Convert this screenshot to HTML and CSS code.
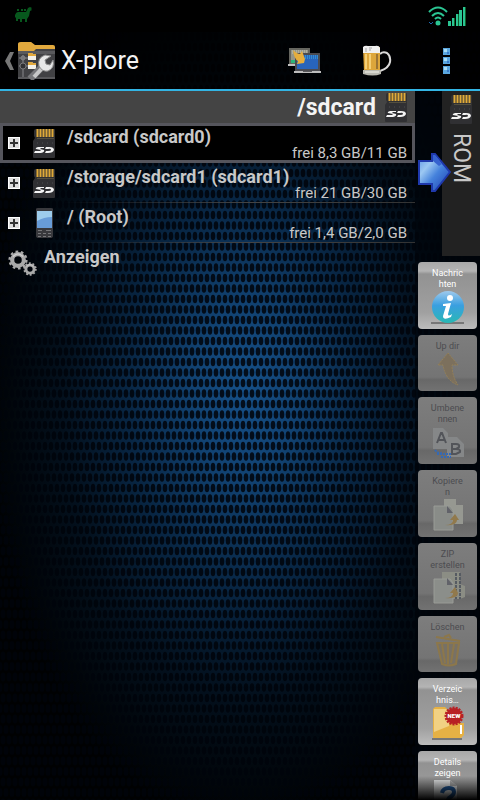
FILE: index.html
```html
<!DOCTYPE html>
<html lang="de">
<head>
<meta charset="utf-8">
<meta name="viewport" content="width=device-width, initial-scale=1">
<title>X-plore</title>
<link rel="stylesheet" href="styles.css">
</head>
<body>
<svg class="wallpaper" width="100%" height="100%" aria-hidden="true">
  <defs>
    <radialGradient id="glow" cx=".51" cy=".49" r=".54">
      <stop offset="0" stop-color="#154f87"/>
      <stop offset=".2" stop-color="#114272"/>
      <stop offset=".45" stop-color="#082644"/>
      <stop offset=".7" stop-color="#03101d"/>
      <stop offset="1" stop-color="#000102"/>
    </radialGradient>
    <pattern id="mesh" width="6" height="21" patternUnits="userSpaceOnUse">
      <g fill="#00040a" fill-opacity=".86">
        <ellipse cx="3" cy="5" rx="2.3" ry="4.3"/>
        <ellipse cx="0" cy="15.5" rx="2.3" ry="4.3"/>
        <ellipse cx="6" cy="15.5" rx="2.3" ry="4.3"/>
      </g>
    </pattern>
  </defs>
  <rect width="100%" height="100%" fill="url(#glow)"/>
  <rect width="100%" height="100%" fill="url(#mesh)"/>
</svg>

<svg class="sprites" aria-hidden="true">
  <symbol id="sd" viewBox="0 0 24 31">
    <path d="M4 1h18q1 0 1 1v27q0 1-1 1H2q-1 0-1-1V13l2-3-1-2V3q0-2 2-2z" fill="#303033"/>
    <path d="M5.500 1v8M8.500 1v8M11.500 1v8M14.500 1v8M17.500 1v8M20.500 1v8" stroke="#e0aa38" stroke-width="2"/>
    <path d="M5 10h17v1H5z" fill="#55503f"/>
    <path d="M12 19H6q-3 1-2 2l5 1-1 1H3l-1 2h7q4-1 3-3l-4-1 1-1h3zM14 19h3q5 0 5 3-1 3-6 3h-3l1-2h2q3 0 3-1 0-2-3-1h-3z" fill="#f4f4f4"/>
    <path d="M5 15h1m4 0h1m4 0h1m4 0h1" stroke="#4c4c50"/>
  </symbol>
  <symbol id="gear" viewBox="-12 -12 24 24">
    <circle r="7" fill="none" stroke="#a9a9a9" stroke-width="5"/>
    <circle r="10" fill="none" stroke="#a9a9a9" stroke-width="3" stroke-dasharray="3.140 3.140"/>
    <path d="M-6-4Q0-11 6-4" fill="none" stroke="#d0d0d0" stroke-width="1.500"/>
  </symbol>
</svg>

<div class="screen">
  <div class="status">
    <svg width="18" height="16" viewBox="0 0 18 16" fill="#07571d" role="img" aria-label="Benachrichtigung">
      <path d="M0 9q1-3 3-3h8l2-4 2-1 2 1-1 1 1 1-2 1-1 5-2 3v3h-2v-3H7v3H5v-3H3v2H1v-3l-1-1z"/>
      <path d="M2 3h2v2H2zM6 3h2v2H6zM9 3h2v2H9z"/>
    </svg>
    <svg width="39" height="20" viewBox="0 0 39 20" role="img" aria-label="WLAN und Mobilfunk">
      <g fill="none" stroke="#2bc593" stroke-width="2">
        <path d="M1 6q9-9 18 0M4 10q6-6 12 0M7 13q3-3 6 0"/>
      </g>
      <circle cx="10" cy="17" r="2.500" fill="#2bc593"/>
      <path d="M1 16l2 2 2-2" fill="none" stroke="#1c6ab0"/>
      <path d="M20 15h3v5h-3zM24 12h3v8h-3zM28 8h2v12h-2zM31 4h3v16h-3zM35 1h3v19h-3z" fill="#2bc593"/>
      <path d="M26 12h1v8h-1zM30 8h1v12h-1zM37 1h1v19h-1z" fill="#0d622c"/>
    </svg>
  </div>

  <header class="appbar">
    <button class="home" type="button" aria-label="Zurück">
      <svg width="10" height="20" viewBox="0 0 10 20"><path d="M5 1h4L5 10l4 9H5L0 10z" fill="#777"/></svg>
      <svg width="39" height="39" viewBox="0 0 39 39">
        <path d="M1 4q0-3 3-3h10l4 4h18q2 0 2 3v30H1z" fill="#414144"/>
        <path d="M1 10V3q0-2 3-2h10l4 3h18q2 0 2 2v2H19l-2 2z" fill="#e2a93d"/>
        <path d="M1 10h37v3H1zM1 36h37v2H1z" fill="#59595c"/>
        <path d="M6 14v22M2 17h9M2 25h10" stroke="#88888b"/>
        <circle cx="6" cy="17" r="2" fill="none" stroke="#88888b"/><circle cx="6" cy="25" r="3" fill="#303033" stroke="#77777a"/>
        <path d="M11 12h4l1 1h3v6h-8zM11 21h4l1 1h3v6h-8z" fill="#f3f0e8"/>
        <path d="M11 12h4l1 1h3v2h-8zM11 21h4l1 1h3v2h-8z" fill="#e2a93d"/>
        <path d="M13 38l12-12" stroke="#77777a" stroke-width="7"/>
        <path d="M17 36l11-12" stroke="#c8c8c8" stroke-width="4"/>
        <path d="M22 25q-2-8 6-11l6 1-6 4 1 4 4 1 3-5q2 8-5 11-6 1-9-5z" fill="#e7e7e7" stroke="#8d8d8d"/>
      </svg>
      <span>X-plore</span>
    </button>
    <div class="actions">
      <button type="button" aria-label="Netzwerk">
        <svg width="34" height="28" viewBox="0 0 34 28">
          <path d="M1 1h21v16H1z" fill="#66665f"/><path d="M3 3h17v10H3z" fill="#969688"/>
          <path d="M4 4h15M4 6h15" stroke="#c7c7b5" stroke-dasharray="1 1"/>
          <path d="M0 17h8v2H0z" fill="#c0c0c0"/><path d="M3 13h4v3H3z" fill="#2bb579"/>
          <path d="M7 6h25v18H7z" fill="#4b4b50"/><path d="M9 8h21v14H9z" fill="#2864bb"/>
          <path d="M17 9h13M17 11h13" stroke="#3eb9e5" stroke-dasharray="1 1"/>
          <path d="M5 3q4 4 7 4l2-3 3 8-1 4-7 1 1-3q-4-2-5-11z" fill="#e6ae3d"/>
          <path d="M6 24h27v2H6z" fill="#bdbdbd"/><path d="M15 24h9v1h-9z" fill="#59595c"/>
        </svg>
      </button>
      <button type="button" aria-label="Spenden">
        <svg width="30" height="32" viewBox="0 0 30 32">
          <path d="M18 9q3-3 7-1 4 3 3 9-1 6-10 9" fill="none" stroke="#d9d9d9" stroke-width="2"/>
          <path d="M1 2h17v25H2z" fill="#dda63b"/>
          <path d="M1 2q2-2 5-1h7q4-1 5 2v5H1z" fill="#f0f0f0"/>
          <path d="M4 9v15M8 9v15" stroke="#f5cf75" stroke-width="2"/><path d="M15 9v15" stroke="#9b7434" stroke-width="2"/>
          <path d="M1 25h18v4q-8 3-18 0z" fill="#b9b9b0"/><path d="M3 27h14" stroke="#f5f5ed"/>
          <path d="M4 3v4M7 3h3M7 5h2" stroke="#a7a7a7"/>
        </svg>
      </button>
      <button type="button" aria-label="Menü">
        <svg width="8" height="26" viewBox="0 0 8 26">
          <path d="M0 0h7v7H0zM0 9h7v7H0zM0 18h7v8H0z" fill="#5aa7df"/>
          <path d="M1 1h3v3H1zM1 10h3v3H1zM1 19h3v3H1z" fill="#a8dcf5"/>
          <path d="M4 4h2v2H4zM4 13h2v2H4zM4 22h2v2H4z" fill="#3a78c7"/>
        </svg>
      </button>
    </div>
  </header>

  <div class="content">
    <main class="pane">
      <h1 class="path">/sdcard <svg width="24" height="31"><use href="#sd"/></svg></h1>
      <ul class="list">
        <li class="row selected">
          <button class="expand" type="button" aria-label="/sdcard öffnen"></button>
          <svg width="24" height="31"><use href="#sd"/></svg>
          <div class="info"><span class="name">/sdcard (sdcard0)</span><span class="free">frei 8,3 GB/11 GB</span></div>
        </li>
        <li class="row">
          <button class="expand" type="button" aria-label="/storage/sdcard1 öffnen"></button>
          <svg width="24" height="31"><use href="#sd"/></svg>
          <div class="info"><span class="name">/storage/sdcard1 (sdcard1)</span><span class="free">frei 21 GB/30 GB</span></div>
        </li>
        <li class="row">
          <button class="expand" type="button" aria-label="Root öffnen"></button>
          <svg width="24" height="31" viewBox="0 0 24 31">
            <path d="M4 1q0-1 2-1h13q2 0 2 1v27q0 2-3 2H7q-3 0-3-2z" fill="#39393d"/>
            <path d="M5 3h15v17H5z" fill="#689cd8"/><path d="M5 3h15v6q-8 0-15 4z" fill="#9dccec"/>
            <path d="M6 22h4v1H6zM14 22h5v1h-5zM6 25h3v1H6zM11 25h3v1h-3zM16 25h3v1h-3zM6 28h3v1H6zM11 28h3v1h-3zM16 28h3v1h-3z" fill="#77777a"/>
          </svg>
          <div class="info"><span class="name">/ (Root)</span><span class="free">frei 1,4 GB/2,0 GB</span></div>
        </li>
        <li class="row show">
          <svg width="30" height="27"><use href="#gear" width="20" height="20"/><use href="#gear" x="15" y="12" width="14" height="14"/></svg>
          <button class="name" type="button">Anzeigen</button>
        </li>
      </ul>
    </main>

    <aside class="side">
      <div class="switch">
        <button class="tab" type="button"><svg width="24" height="31"><use href="#sd"/></svg><span>ROM</span></button>
        <svg class="arrow" width="33" height="39" viewBox="0 0 33 39" aria-hidden="true">
          <defs><linearGradient id="blue" x2="1" y2="1"><stop stop-color="#5c94e4"/><stop offset=".3" stop-color="#9cc8f2"/><stop offset=".55" stop-color="#4582dc"/><stop offset="1" stop-color="#1a3cae"/></linearGradient></defs>
          <path d="M1 8h13V1h3l15 18-15 19h-3v-7H1z" fill="url(#blue)" stroke="#1f39ad" stroke-width="2"/>
          <path d="M15 2h2l7 9-3 2-6-5z" fill="#3562cf"/>
        </svg>
      </div>
      <div class="tools">
        <button class="tool" type="button"><span>Nachric<br>hten</span>
          <svg width="35" height="35" viewBox="0 0 35 35">
            <path d="M1 33h33" stroke="#777" stroke-width="2"/>
            <defs><linearGradient id="orb" x2="0" y2="1"><stop stop-color="#9fc9ec"/><stop offset=".45" stop-color="#3a9fe0"/><stop offset="1" stop-color="#28b8b4"/></linearGradient></defs>
            <circle cx="18" cy="17" r="16" fill="url(#orb)"/>
            <path d="M13 14l8-1-3 11q0 3 4 0l-1 3q-8 4-8-1l3-10h-3z" fill="#fff"/><circle cx="20" cy="8" r="3" fill="#fff"/>
          </svg></button>
        <button class="tool" type="button" disabled><span>Up dir</span>
          <svg width="35" height="35" viewBox="0 0 35 35"><path d="M8 13L18 1l10 12h-6q0 11 6 20-12-4-15-20z" fill="#7c705d" stroke="#948058" stroke-dasharray="2 1"/></svg></button>
        <button class="tool" type="button" disabled><span>Umbene<br>nnen</span>
          <svg width="35" height="35" viewBox="0 0 35 35"><path d="M3 3h10l5 5v16H3zM17 12h10l7 7v13H17z" fill="#858788"/>
            <path d="M7 18l4-10h1l4 10M8 15h7M22 29V19h4q4 0 3 3l-3 2q5 0 4 3l-4 2zM23 24h4" fill="none" stroke="#525459" stroke-width="2"/>
            <path d="M5 25q3 4 7 3M7 29h14M11 32h10" fill="none" stroke="#3469b5" stroke-width="2" stroke-dasharray="2 1"/></svg></button>
        <button class="tool" type="button" disabled><span>Kopiere<br>n</span>
          <svg width="35" height="35" viewBox="0 0 35 35"><path d="M14 1h12v6h7v19H14z" fill="#969891"/><path d="M4 8h16l3 4v20H4z" fill="#898c88" stroke="#999b96"/>
            <path d="M17 8l6 7h-6z" fill="#616269"/><path d="M15 27q8 0 8-5h-3l5-6 4 6h-2q0 6-12 5z" fill="#91794c"/></svg></button>
        <button class="tool" type="button" disabled><span>ZIP<br>erstellen</span>
          <svg width="35" height="35" viewBox="0 0 35 35"><path d="M12 1h18v12l5 2v11l-5 2H12z" fill="#8b8d84"/><path d="M4 8h16l3 4v20H4z" fill="#8b8e8a" stroke="#999b96"/>
            <path d="M26 2v26M30 2v26" stroke="#565b62" stroke-width="2" stroke-dasharray="3 1"/><path d="M17 7l6 7h-6z" fill="#616269"/><path d="M15 27q8 0 8-5h-3l5-6 3 6q0 6-13 5z" fill="#91794c"/></svg></button>
        <button class="tool" type="button" disabled><span>Löschen</span>
          <svg width="35" height="35" viewBox="0 0 35 35"><path d="M8 10h21l-3 21q-7 3-14 0z" fill="#777166"/><path d="M6 4l24 4M14 4l5-2 2 3M7 10h22l-3 21q-7 3-14 0zM12 11l3 19M18 11v20M24 11l-3 19" fill="none" stroke="#8c774b" stroke-width="2"/></svg></button>
        <button class="tool" type="button"><span>Verzeic<br>hnis…</span>
          <svg width="35" height="35" viewBox="0 0 35 35"><path d="M2 33h30" stroke="#777" stroke-width="2"/><path d="M3 3l2-2h10l3 3h12v13h4v12l-3 3H3z" fill="#e6b144"/><path d="M4 3h12l3 4v13L4 26z" fill="#f1d183"/><path d="M30 19h2v9h-2z" fill="#fff"/>
            <circle cx="24" cy="10" r="8" fill="#b82024" stroke="#b82024" stroke-width="3" stroke-dasharray="2 1"/><text class="new" x="24" y="12" text-anchor="middle">NEW</text></svg></button>
        <button class="tool" type="button"><span>Details<br>zeigen</span>
          <svg width="35" height="35" viewBox="0 0 35 35"><path d="M4 1h16l7 6v27H4z" fill="#e3e5e6"/><path d="M20 1l7 6h-7z" fill="#aaa"/><path d="M12 14q1-5 7-5 5 0 5 4 0 3-5 6l-3 5" fill="none" stroke="#1f5798" stroke-width="4"/></svg></button>
      </div>
    </aside>
  </div>
</div>
</body>
</html>
```
FILE: styles.css
```css
* { box-sizing: border-box; }
html, body { height: 100%; }
body {
  margin: 0;
  overflow: hidden;
  background: #000;
  color: #c8c8c8;
  font-family: Roboto, "Liberation Sans", sans-serif;
}
svg { display: block; flex: none; }
button {
  margin: 0;
  padding: 0;
  border: 0;
  background: none;
  color: inherit;
  font: inherit;
}
.wallpaper { position: absolute; inset: 0; }
.sprites { position: absolute; width: 0; height: 0; }
.screen {
  position: relative;
  display: flex;
  flex-direction: column;
  height: 100%;
}
.status {
  display: flex;
  justify-content: space-between;
  align-items: flex-start;
  padding: 6px 13px 6px 15px;
  background: #000;
}
.appbar {
  display: flex;
  justify-content: space-between;
  align-items: center;
  height: 59px;
  border-bottom: 2px solid #33b5e5;
  background: rgba(0, 0, 0, .7);
}
.home {
  display: flex;
  align-items: center;
  padding-left: 5px;
  gap: 2px;
  color: #f2f2f2;
  font-size: 25px;
}
.home span { padding-left: 3px; }
.actions {
  display: grid;
  grid-template-columns: 70px 74px 66px;
  justify-items: center;
  align-items: center;
}
.content {
  display: flex;
  flex: 1;
  min-height: 0;
}
.pane { flex: 1; min-width: 0; }
.path {
  display: flex;
  justify-content: flex-end;
  align-items: center;
  gap: 8px;
  height: 32px;
  margin: 0;
  padding-right: 7px;
  background: #444;
  color: #f4f4f4;
  font-size: 23px;
  font-weight: 700;
}
.list { margin: 0; padding: 0; list-style: none; }
.row {
  display: flex;
  align-items: center;
  height: 40px;
  padding: 0 8px;
  background: linear-gradient(90deg, transparent 15%, #444 60%, #333) bottom / 100% 1px no-repeat;
}
.row.selected {
  padding: 0 5px;
  border: 3px solid #55555c;
  background: #000;
}
.expand {
  width: 12px;
  height: 12px;
  margin-right: 12px;
  flex: none;
  border: 1px solid #fff;
  background:
    linear-gradient(#333, #333) center / 8px 2px no-repeat,
    linear-gradient(#333, #333) center / 2px 8px no-repeat,
    #ddd;
}
.info {
  display: flex;
  flex: 1;
  flex-direction: column;
  padding-left: 11px;
}
.name {
  font-size: 18px;
  font-weight: 700;
  line-height: 20px;
}
.free {
  align-self: flex-end;
  font-size: 15px;
  line-height: 12px;
}
.row.show { gap: 6px; background: none; }
.row.show .name { align-self: flex-start; padding-top: 4px; }
.side {
  display: flex;
  flex-direction: column;
  width: 65px;
  background: rgba(0, 4, 10, .65);
}
.switch {
  position: relative;
  display: flex;
  justify-content: flex-end;
  height: 165px;
  flex: none;
}
.tab {
  display: flex;
  flex-direction: column;
  align-items: center;
  gap: 8px;
  width: 38px;
  padding-top: 3px;
  background: #222;
  font-size: 23px;
}
.tab span { writing-mode: vertical-rl; line-height: 28px; }
.arrow { position: absolute; left: 3px; top: 62px; }
.tools {
  position: relative;
  display: flex;
  flex: 1;
  flex-direction: column;
  gap: 6px;
  min-height: 0;
  padding: 6px 3px 0;
  overflow: hidden;
}
.tools::after {
  position: absolute;
  inset: auto 0 0;
  height: 24px;
  background: linear-gradient(transparent, #000);
  content: "";
}
.tool {
  display: flex;
  flex: none;
  flex-direction: column;
  align-items: center;
  padding: 6px 0 4px;
  border-radius: 4px;
  background: linear-gradient(#a8a8a8, #b4b4b4 9px, #929292 12px, #a0a0a0 75%, #bcbcbc);
  color: #fff;
  font-size: 9px;
  line-height: 11px;
}
.tool:disabled {
  background: linear-gradient(#7d7d7d, #747474 75%, #686868 80%, #727272);
  color: #4c4c50;
}
.new { fill: #fff; font-size: 6px; font-weight: 900; }
```
